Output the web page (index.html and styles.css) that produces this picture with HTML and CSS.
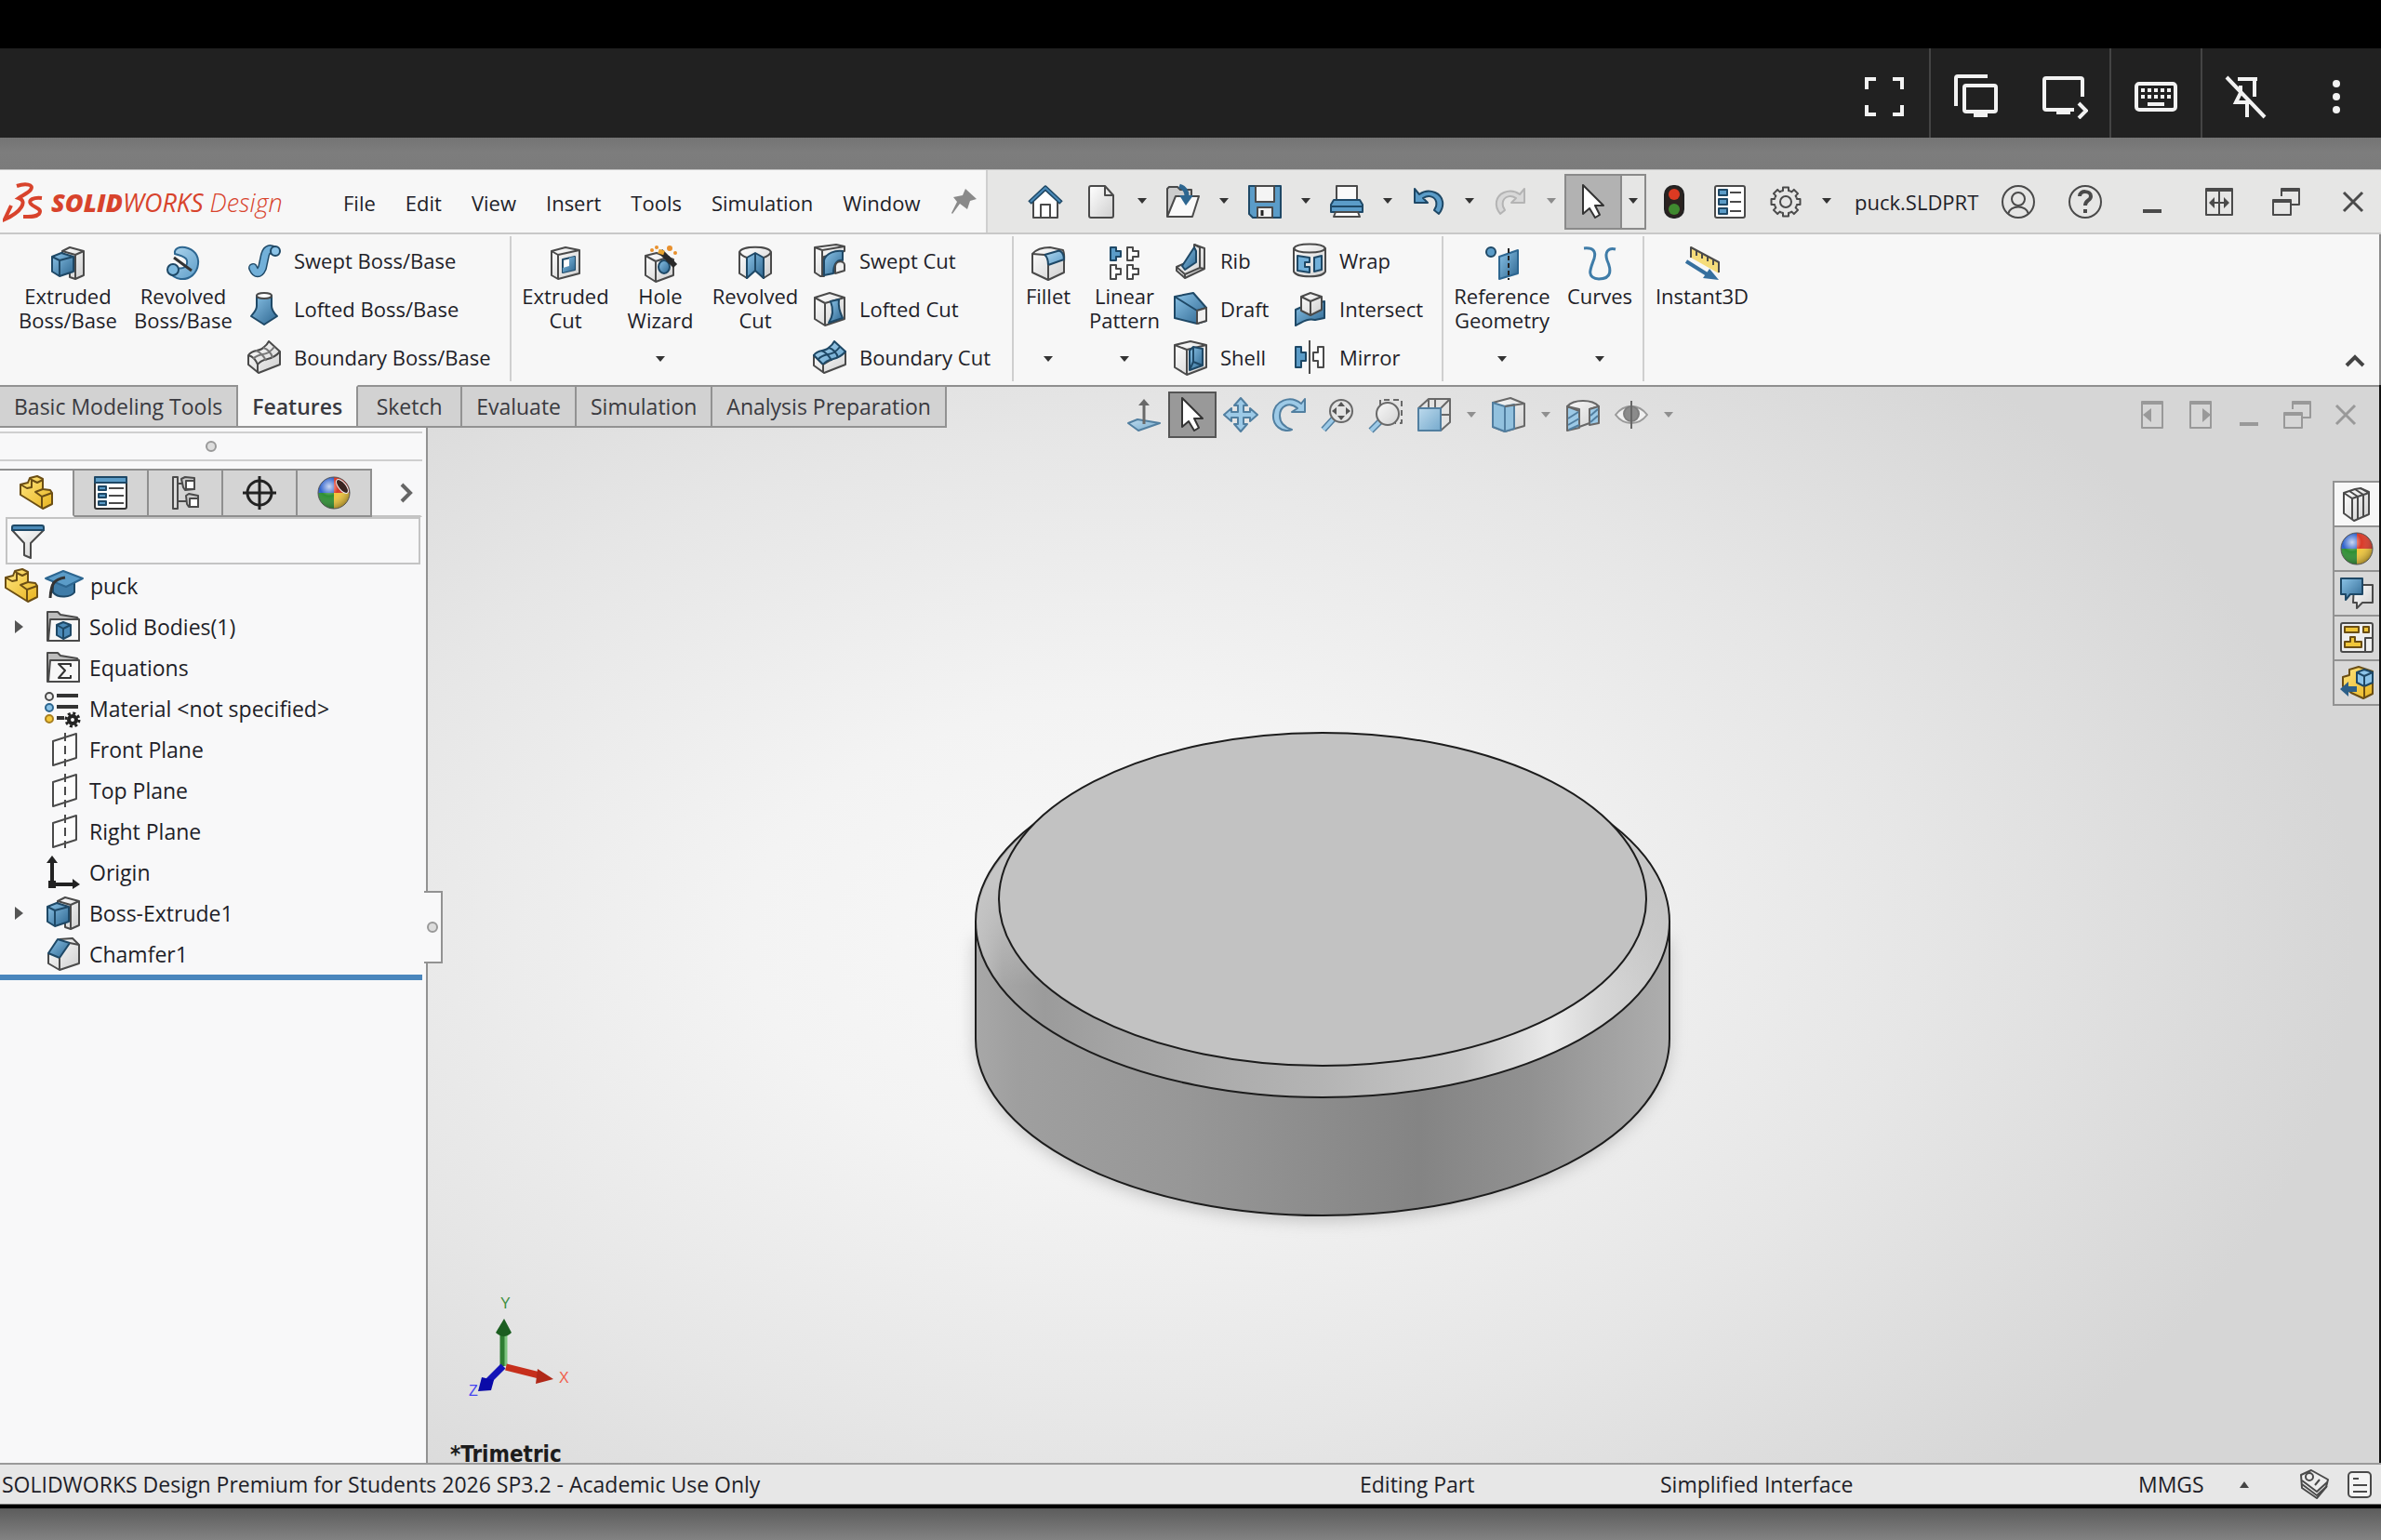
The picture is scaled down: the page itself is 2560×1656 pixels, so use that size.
FILE: index.html
```html
<!DOCTYPE html>
<html lang="en">
<head>
<meta charset="utf-8">
<title>SOLIDWORKS Design - puck.SLDPRT</title>
<link rel="stylesheet" href="styles.css">
</head>
<body>
<svg class="defs" aria-hidden="true">
  <defs>
    <linearGradient id="b" x1="0" y1="0" x2="1" y2="1"><stop offset="0" stop-color="#8cc4e8"/><stop offset="1" stop-color="#2d6690"/></linearGradient>
    <linearGradient id="lb" x1="0" y1="0" x2="1" y2="1"><stop offset="0" stop-color="#b4d9f0"/><stop offset="1" stop-color="#5b9cc8"/></linearGradient>
    <linearGradient id="w" x1="0" y1="0" x2="1" y2="1"><stop offset="0" stop-color="#ffffff"/><stop offset="1" stop-color="#cfcfcf"/></linearGradient>
    <linearGradient id="y" x1="0" y1="0" x2="1" y2="1"><stop offset="0" stop-color="#ffe680"/><stop offset="1" stop-color="#e8b420"/></linearGradient>
    <radialGradient id="shine" cx=".35" cy=".3" r=".75"><stop offset="0" stop-color="#fff" stop-opacity=".75"/><stop offset=".4" stop-color="#fff" stop-opacity="0"/><stop offset="1" stop-color="#000" stop-opacity=".35"/></radialGradient>
    <symbol id="i-down" viewBox="0 0 10 7"><path d="M0 0H10L5 6Z" fill="currentColor" stroke="none"/></symbol>
    <symbol id="i-boss" viewBox="0 0 36 36"><path d="M12 5 20 1 35 5V31L26 35 20 33V12L12 10Z" fill="url(#w)"/><path d="M12 5 26 9V35M26 9 35 5"/><path d="M1 11 11 7 24 11V27L9 32 1 27Z" fill="url(#b)" stroke="#1e4866"/><path d="M1 11 9 15 24 11M9 15V32" stroke="#1e4866"/></symbol>
    <symbol id="i-revolve" viewBox="0 0 36 36"><path d="M9 8C8 2 14 0 20 1 30 3 35 10 34 19 33 29 25 36 15 35 9 34 6 32 3 28L11 23C19 25 23 21 22 15 20 10 14 10 9 8Z" fill="url(#lb)" stroke="#2d6690"/><circle cx="7" cy="25" r="6" fill="#7fb9de" stroke="#1e4866"/><path d="M8 12 27 26" stroke="#333" stroke-width="3"/></symbol>
    <symbol id="i-sweep" viewBox="0 0 36 36"><path d="M6 26C9 33 13 33 16 26L19 12C21 5 25 5 29 8" stroke="#1e4866" stroke-width="10" stroke-linecap="round"/><path d="M6 26C9 33 13 33 16 26L19 12C21 5 25 5 29 8" stroke="#72b0d9" stroke-width="7" stroke-linecap="round"/><circle cx="30" cy="8" r="5" fill="#8cc4e8" stroke="#1e4866"/></symbol>
    <symbol id="i-loft" viewBox="0 0 36 36"><path d="M10 4V15C10 20 6 23 4 26L18 35 32 26C29 23 26 20 26 15V4Z" fill="url(#b)" stroke="#1e4866"/><ellipse cx="18" cy="4" rx="8" ry="3" fill="#fff"/></symbol>
    <symbol id="i-boundary" viewBox="0 0 36 36"><path d="M1 16C6 9 13 13 18 7 21 5 22 3 23 1L35 12V26L12 35 1 26Z" fill="url(#w)"/><path d="M1 16C5 17 9 21 11 26V35M11 26C18 17 25 24 35 12" /><path d="M6 20C13 12 20 19 29 7M9 11C13 12 18 17 20 22M17 8C22 9 26 14 27 19" stroke="#777"/></symbol>
    <symbol id="i-boundcut" viewBox="0 0 36 36"><path d="M1 16V27L12 35 35 26V12L11 26Z" fill="url(#w)"/><path d="M1 16C6 9 13 13 18 7 21 5 22 3 23 1L35 12C25 24 18 17 11 26Z" fill="url(#lb)" stroke="#1e4866"/><path d="M6 20C13 12 20 19 29 7M9 11C13 12 18 17 20 22M17 8C22 9 26 14 27 19" stroke="#1e4866"/><path d="M11 26V35"/></symbol>
    <symbol id="i-excut" viewBox="0 0 36 36"><path d="M3 5 18 1 33 4V29L10 35 3 31Z" fill="url(#w)"/><path d="M3 5 10 9 33 4M10 9V35"/><path d="M15 14 28 11V25L15 28Z" fill="#fff" stroke="#1e4866"/><path d="M22 12 28 11V25L15 28V23L22 21Z" fill="url(#b)" stroke="none"/></symbol>
    <symbol id="i-hole" viewBox="0 0 36 36"><path d="M2 10 14 7 32 14V31L13 38 2 31Z" fill="url(#w)"/><path d="M2 10 13 16V38M13 16 28 11"/><ellipse cx="22" cy="22" rx="6" ry="7" fill="url(#b)" stroke="#1e4866"/><path d="M18 5 34 21" stroke="#2a2a2a" stroke-width="6"/><path d="M16 5 22 7" stroke="#e8a32e" stroke-width="5"/><g fill="#e8902e" stroke="none"><circle cx="9" cy="4" r="2"/><circle cx="14" cy="1" r="2"/><circle cx="28" cy="2" r="3"/><circle cx="34" cy="7" r="2"/></g></symbol>
    <symbol id="i-revcut" viewBox="0 0 36 36"><path d="M1 6V29L9 34 18 25 27 34 35 29V6C32-1 4-1 1 6Z" fill="url(#w)"/><path d="M9 12 18 7 27 12V34L18 26 9 34Z" fill="url(#b)" stroke="#1e4866"/><path d="M18 7V26" stroke="#1e4866"/><path d="M1 6C3 10 6 11 9 12M27 12C30 11 33 10 35 6"/></symbol>
    <symbol id="i-sweepcut" viewBox="0 0 36 36"><path d="M2 4 25 1 34 3V8L12 14V35L8 35 2 31Z" fill="url(#w)"/><path d="M2 4 10 7 34 3M10 7V35"/><path d="M12 34V18C14 10 24 7 32 8V18C26 17 22 22 22 32Z" fill="url(#b)" stroke="#1e4866"/><path d="M24 32V24C25 18 34 18 34 23V29Z" fill="#eee"/></symbol>
    <symbol id="i-loftcut" viewBox="0 0 36 36"><path d="M2 6 18 1 34 6V29L13 36 2 29Z" fill="url(#w)"/><path d="M2 6 13 12 34 6M13 12V36"/><path d="M19 10 28 8C27 16 29 22 32 28L17 33C22 26 22 18 19 10Z" fill="url(#b)" stroke="#1e4866"/></symbol>
    <symbol id="i-fillet" viewBox="0 0 36 36"><path d="M1 8C6 2 14 1 20 1L34 4C36 9 35 13 35 18V28L18 36 1 28Z" fill="url(#w)"/><path d="M14 9 28 5C32 4 35 8 35 14L18 20C18 14 17 11 14 9Z" fill="url(#lb)" stroke="#1e4866"/><path d="M1 8 14 9M18 20V36"/></symbol>
    <symbol id="i-pattern" viewBox="0 0 36 36"><path d="M3 1H9V5H14V11H9V15H3Z" fill="#5b9cc8" stroke="#1e4866"/><path d="M21 1H27V5H33V11H27V15H21ZM3 20H9V24H14V30H9V35H3ZM21 20H27V24H33V30H27V35H21Z" fill="#fff"/></symbol>
    <symbol id="i-rib" viewBox="0 0 36 36"><path d="M3 25 12 21 22 18V1L33 5V27L12 37 3 29Z" fill="url(#w)"/><path d="M22 1 28 4V26L12 33M3 25 12 33V37M28 26 33 27"/><path d="M9 24 22 4 24 8V20L12 28Z" fill="url(#b)" stroke="#1e4866"/></symbol>
    <symbol id="i-draft" viewBox="0 0 36 36"><path d="M1 5 21 1 35 17V31L25 34 1 28Z" fill="url(#b)" stroke="#1e4866"/><path d="M1 5 25 20 35 17M25 20V34" stroke="#1e4866"/><path d="M25 20 35 17V31L25 34Z" fill="#f0f0f0"/></symbol>
    <symbol id="i-shell" viewBox="0 0 36 36"><path d="M1 5 18 1 35 5V29L14 37 1 29Z" fill="url(#w)"/><path d="M1 5 14 10V37M14 10 35 5"/><path d="M17 11 21 7 31 9V27L17 32Z" fill="url(#b)" stroke="#1e4866"/><path d="M21 7V23L31 27M21 23 17 32" stroke="#1e4866"/></symbol>
    <symbol id="i-wrap" viewBox="0 0 36 36"><path d="M1 5V30C4 37 32 37 35 30V5C32-1 4-1 1 5Z" fill="url(#w)"/><path d="M1 5C4 11 32 11 35 5"/><path d="M5 13 18 15V20H13V25H18V31L5 29ZM23 15 31 13V28L23 30Z" fill="#72b0d9" stroke="#1e4866"/></symbol>
    <symbol id="i-intersect" viewBox="0 0 36 36"><path d="M3 19 12 15 34 10V28L24 30C14 28 10 33 3 36Z" fill="url(#b)" stroke="#1e4866"/><path d="M9 5 19 1 31 5V19L19 25 9 20Z" fill="url(#w)"/><path d="M9 5 19 10 31 5M19 10V25"/></symbol>
    <symbol id="i-mirror" viewBox="0 0 36 36"><path d="M3 7H9V13H14V22H9V29H3Z" fill="#5b9cc8" stroke="#1e4866"/><path d="M18 0V36"/><path d="M33 7H27V13H22V22H27V29H33Z" fill="#fff"/></symbol>
    <symbol id="i-refgeo" viewBox="0 0 36 36"><circle cx="6" cy="6" r="5" fill="#5b9cc8" stroke="#1e4866"/><path d="M15 11 35 4V29L15 35Z" fill="url(#b)" stroke="#2d6690"/><path d="M25 2V36" stroke="#222" stroke-dasharray="5 3"/></symbol>
    <symbol id="i-curves" viewBox="0 0 36 36"><path d="M1 2C12 1 14 6 12 13 9 22 2 34 17 35 32 35 30 24 26 15 23 6 27 1 35 3" stroke="#3f7ca8" stroke-width="3"/></symbol>
    <symbol id="i-instant" viewBox="0 0 36 36"><path d="M6 0 36 17V29L6 12Z" fill="#f5dc7a" stroke="none"/><path d="M36 28V17L6 1V12M12 4V10M18 8V13M24 11V16M30 14V20"/><path d="M1 16 25 31" stroke="#356f9e" stroke-width="4"/><path d="M19 34 26 24 36 36Z" fill="#356f9e" stroke="none"/></symbol>
    <symbol id="i-arrow" viewBox="0 0 36 36"><path d="M7 0V31L14 25 20 35 25 32 20 22 29 22Z" fill="#fff" stroke="#333"/></symbol>
    <symbol id="i-restore" viewBox="0 0 36 36"><path d="M13 12V4H32V21H23" /><path d="M13 5H32M4 17H23" stroke-width="4"/><path d="M4 16H23V32H4Z"/></symbol>
    <symbol id="i-min" viewBox="0 0 36 36"><path d="M8 28H28" stroke-width="4"/></symbol>
    <symbol id="i-close" viewBox="0 0 36 36"><path d="M8 8 28 28M28 8 8 28" stroke-width="3"/></symbol>
    <symbol id="i-part" viewBox="0 0 36 36"><path d="M1 9 9 7 11 2 19 0 25 3V14L33 15 35 18V30L25 35 1 20Z" fill="url(#y)" stroke="#6b4e14"/><path d="M1 9 8 13 13 12V4L19 7 25 4M11 2 13 4M24 22 35 18M24 22V35M24 22 17 17 25 14" stroke="#6b4e14"/></symbol>
    <symbol id="i-plane" viewBox="0 0 36 36"><path d="M7 9 32 1V27L7 35Z" fill="#fcfcfc"/><path d="M20 0V36" stroke-dasharray="9 5"/></symbol>
    <symbol id="i-folder" viewBox="0 0 36 36"><path d="M1 33V2H12L15 5 33 8 35 11V33Z" fill="#bdbdbd"/><path d="M4 10H35V33H2Z" fill="#f7f7f7"/></symbol>
    <symbol id="i-ball" viewBox="0 0 36 36"><g stroke="none"><path d="M18 18V1A17 17 0 0 0 1 18Z" fill="#2f62cc"/><path d="M18 18V1A17 17 0 0 1 35 18Z" fill="#d93a28"/><path d="M18 18H1A17 17 0 0 0 18 35Z" fill="#2e8f33"/><path d="M18 18H35A17 17 0 0 1 18 35Z" fill="#f0c63a"/></g><circle cx="18" cy="18" r="17" fill="url(#shine)" stroke="#555" stroke-width="1"/></symbol>
    <symbol id="i-list" viewBox="0 0 36 36"><rect x="2" y="1" width="32" height="34" rx="2" fill="#fff"/><path d="M6 5H15V11H6ZM6 15H15V21H6ZM6 25H15V31H6Z" fill="#5b9cc8" stroke="#1e4866"/><path d="M18 8H30M18 18H30M18 28H30"/></symbol>
  </defs>
</svg>

<div class="letterbox"></div>
<header class="remote">
  <button aria-label="Full screen"><svg width="48" height="48" viewBox="0 0 48 48"><path d="M5 16V5H15M33 5H43V16M43 33V43H33M15 43H5V33"/></svg></button>
  <button class="divided" aria-label="Displays"><svg width="48" height="48" viewBox="0 0 48 48"><path d="M3 34V4Q3 2 5 2H37"/><rect x="12" y="12" width="34" height="28" rx="2"/><path d="M22 43H37" stroke-width="6"/></svg></button>
  <button aria-label="Send to display"><svg width="50" height="48" viewBox="0 0 50 48"><path d="M44 24V6Q44 4 42 4H5Q3 4 3 6V36Q3 38 5 38H35M40 31 48 39 40 47"/><path d="M16 40H31" stroke-width="6"/></svg></button>
  <button class="divided" aria-label="Keyboard"><svg width="48" height="48" viewBox="0 0 48 48"><rect x="3" y="10" width="42" height="28" rx="3"/><path d="M8 17H42M8 24H42" stroke-width="4" stroke-dasharray="4 3"/><path d="M15 32H33" stroke-width="4"/></svg></button>
  <button class="divided" aria-label="Unpin toolbar"><svg width="48" height="48" viewBox="0 0 48 48"><path d="M2 3 43 46M14 5H35M32 5V24M17 12V20L12 30H27M24 30V46"/></svg></button>
  <button aria-label="More"><svg width="48" height="48" viewBox="0 0 48 48"><g class="dots"><circle cx="24" cy="10" r="4"/><circle cx="24" cy="24" r="4"/><circle cx="24" cy="38" r="4"/></g></svg></button>
</header>

<div class="desktop">
<main class="app">
  <div class="titlebar">
    <div class="menu-side">
      <div class="logo"><svg class="mark" width="46" height="44" viewBox="0 0 46 44"><path d="M15 4C24 1 34 2 30 8 27 12 21 14 17 17 27 20 20 32 2 40L9 25"/><path d="M42 17C33 16 27 19 30 23 34 28 43 28 39 34 35 38 29 37 22 37"/></svg><span class="brand"><b>SOLID</b>WORKS <span class="thin">Design</span></span></div>
      <nav class="menus">
        <button>File</button><button>Edit</button><button>View</button><button>Insert</button><button>Tools</button><button>Simulation</button><button>Window</button>
      </nav>
      <button class="pin" aria-label="Pin menu"><svg width="30" height="32" viewBox="0 0 30 32"><path d="M16 1 28 12 21 14 18 23 10 17 2 28 1 27 7 15 3 10 13 8Z"/></svg></button>
    </div>
    <div class="quick">
      <button class="home" aria-label="Home"><svg class="ic"><path d="M5 17V35H31V17L18 5Z" fill="#fff"/><path d="M13 35V21H23V35"/><path d="M1 19 18 3 35 19" stroke="#1e4866" stroke-width="5"/><path d="M2 18 18 3 34 18" stroke="#4b8ab8" stroke-width="2"/></svg></button>
      <div class="split"><button aria-label="New"><svg class="ic"><path d="M5 3Q5 1 7 1H22L31 11V33Q31 35 29 35H7Q5 35 5 33Z" fill="url(#w)"/><path d="M22 1V11H31"/></svg></button><button class="drop" aria-label="New options"><svg><use href="#i-down"/></svg></button></div>
      <div class="split"><button aria-label="Open"><svg class="ic"><path d="M1 34V4L3 2H12L15 5H27V12" fill="#ccc"/><path d="M1 34 10 12H35L28 34Z" fill="#fafafa"/><path d="M14 1C20 3 22 7 22 12" stroke="#2d6690" stroke-width="5"/><path d="M14 11H29L21 22Z" fill="#2d6690" stroke="none"/></svg></button><button class="drop" aria-label="Open options"><svg><use href="#i-down"/></svg></button></div>
      <div class="split"><button aria-label="Save"><svg class="ic"><path d="M1 1H35V35H5L1 31Z" fill="#5b9cc8" stroke="#1e4866"/><path d="M8 1H28V18H8ZM10 24H26V35H10Z" fill="#f4f4f4"/><path d="M15 27V33" stroke="#222" stroke-width="3"/></svg></button><button class="drop" aria-label="Save options"><svg><use href="#i-down"/></svg></button></div>
      <div class="split"><button aria-label="Print"><svg class="ic"><path d="M7 1H29V18H7Z" fill="#fafafa"/><path d="M4 16H32L35 21V29H1V21Z" fill="#5b9cc8" stroke="#1e4866"/><path d="M1 23H35" stroke="#1e4866"/><path d="M6 29H30L32 34H4Z" fill="#fff"/></svg></button><button class="drop" aria-label="Print options"><svg><use href="#i-down"/></svg></button></div>
      <div class="split"><button aria-label="Undo"><svg class="ic"><path d="M3 4V19H17L12 14C20 9 28 14 26 23L24 27 29 31C36 22 34 12 25 8 18 5 12 7 8 10Z" fill="#5b9cc8" stroke="#1e4866"/></svg></button><button class="drop" aria-label="Undo options"><svg><use href="#i-down"/></svg></button></div>
      <div class="split off"><button aria-label="Redo" disabled><svg class="ic"><path d="M33 4V19H19L24 14C16 9 8 14 10 23L12 27 7 31C0 22 2 12 11 8 18 5 24 7 28 10Z" fill="#d8d8d8" stroke="#b4b4b4"/></svg></button><button class="drop" aria-label="Redo options" disabled><svg><use href="#i-down"/></svg></button></div>
      <div class="select"><button class="on" aria-label="Select"><svg class="ic"><use href="#i-arrow"/></svg></button><button class="more" aria-label="Select options"><svg><use href="#i-down"/></svg></button></div>
      <button aria-label="Rebuild"><svg class="ic"><rect x="8" y="1" width="20" height="34" rx="9" fill="#2b2320" stroke="#222"/><circle cx="18" cy="10" r="6" fill="#dd3a22" stroke="none"/><circle cx="18" cy="26" r="6" fill="#3f8a2f" stroke="none"/></svg></button>
      <button class="spaced" aria-label="File properties"><svg class="ic"><use href="#i-list"/></svg></button>
      <div class="split spaced"><button aria-label="Options"><svg class="ic"><g transform="translate(18 18)"><path id="tooth" d="M11.550 -4.780 12 -3 15.500 -3V3H12L11.550 4.780"/><use href="#tooth" transform="rotate(45)"/><use href="#tooth" transform="rotate(90)"/><use href="#tooth" transform="rotate(135)"/><use href="#tooth" transform="rotate(180)"/><use href="#tooth" transform="rotate(225)"/><use href="#tooth" transform="rotate(270)"/><use href="#tooth" transform="rotate(315)"/><circle r="6"/></g></svg></button><button class="drop" aria-label="Options menu"><svg><use href="#i-down"/></svg></button></div>
      <span class="doc-name">puck.SLDPRT</span>
      <div class="window-buttons">
        <button aria-label="Account"><svg class="ic"><circle cx="18" cy="18" r="17"/><circle cx="18" cy="15" r="7"/><path d="M7 31C9 21 27 21 29 31"/></svg></button>
        <button aria-label="Help"><svg class="ic"><circle cx="18" cy="18" r="17"/><path d="M12 12C12 5 24 6 24 12 24 17 18 16 18 22" stroke-width="4"/><path d="M18 26V30" stroke-width="4"/></svg></button>
        <button aria-label="Minimize"><svg class="ic"><use href="#i-min"/></svg></button>
        <button aria-label="Span displays"><svg class="ic"><path d="M4 4H32V32H4ZM18 4V32M9 19H27"/><path d="M4 5H32" stroke-width="4"/><path d="M13 13V25L7 19ZM23 13V25L29 19Z" fill="#4a4a4a" stroke="none"/></svg></button>
        <button aria-label="Restore"><svg class="ic"><use href="#i-restore"/></svg></button>
        <button aria-label="Close"><svg class="ic"><use href="#i-close"/></svg></button>
      </div>
    </div>
  </div>

  <div class="ribbon">
    <section class="group boss">
      <button class="big"><svg class="ic"><use href="#i-boss"/></svg>Extruded<br>Boss/Base</button>
      <button class="big"><svg class="ic"><use href="#i-revolve"/></svg>Revolved<br>Boss/Base</button>
      <div class="stack">
        <button><svg class="ic"><use href="#i-sweep"/></svg>Swept Boss/Base</button>
        <button><svg class="ic"><use href="#i-loft"/></svg>Lofted Boss/Base</button>
        <button><svg class="ic"><use href="#i-boundary"/></svg>Boundary Boss/Base</button>
      </div>
    </section>
    <section class="group cut">
      <button class="big"><svg class="ic"><use href="#i-excut"/></svg>Extruded<br>Cut</button>
      <button class="big"><svg class="ic"><use href="#i-hole"/></svg>Hole<br>Wizard<svg class="caret"><use href="#i-down"/></svg></button>
      <button class="big"><svg class="ic"><use href="#i-revcut"/></svg>Revolved<br>Cut</button>
      <div class="stack">
        <button><svg class="ic"><use href="#i-sweepcut"/></svg>Swept Cut</button>
        <button><svg class="ic"><use href="#i-loftcut"/></svg>Lofted Cut</button>
        <button><svg class="ic"><use href="#i-boundcut"/></svg>Boundary Cut</button>
      </div>
    </section>
    <section class="group edit">
      <button class="big"><svg class="ic"><use href="#i-fillet"/></svg>Fillet<svg class="caret"><use href="#i-down"/></svg></button>
      <button class="big wide"><svg class="ic"><use href="#i-pattern"/></svg>Linear<br>Pattern<svg class="caret"><use href="#i-down"/></svg></button>
      <div class="stack">
        <button><svg class="ic"><use href="#i-rib"/></svg>Rib</button>
        <button><svg class="ic"><use href="#i-draft"/></svg>Draft</button>
        <button><svg class="ic"><use href="#i-shell"/></svg>Shell</button>
      </div>
      <div class="stack second">
        <button><svg class="ic"><use href="#i-wrap"/></svg>Wrap</button>
        <button><svg class="ic"><use href="#i-intersect"/></svg>Intersect</button>
        <button><svg class="ic"><use href="#i-mirror"/></svg>Mirror</button>
      </div>
    </section>
    <section class="group ref">
      <button class="big wide"><svg class="ic"><use href="#i-refgeo"/></svg>Reference<br>Geometry<svg class="caret"><use href="#i-down"/></svg></button>
      <button class="big"><svg class="ic"><use href="#i-curves"/></svg>Curves<svg class="caret"><use href="#i-down"/></svg></button>
    </section>
    <section class="group last">
      <button class="big"><svg class="ic"><use href="#i-instant"/></svg>Instant3D</button>
    </section>
    <button class="collapse" aria-label="Collapse ribbon"><svg width="22" height="14" viewBox="0 0 22 14"><path d="M2 12 11 3 20 12"/></svg></button>
  </div>

  <div class="work">
    <div class="strip">
      <nav class="tabs">
        <button>Basic Modeling Tools</button><button class="current">Features</button><button>Sketch</button><button>Evaluate</button><button>Simulation</button><button>Analysis Preparation</button>
      </nav>
      <div class="hud">
        <button aria-label="Normal to"><svg class="ic"><path d="M1 27 11 23 35 27 12 35Z" fill="url(#lb)" stroke="#2d6690"/><path d="M18 28V5" stroke-width="3"/><path d="M12 8 18 1 24 8Z" fill="#4a4a4a" stroke="none"/></svg></button>
        <button class="on" aria-label="Select"><svg class="ic"><use href="#i-arrow"/></svg></button>
        <button aria-label="Pan"><svg class="ic"><path d="M18 0 25 8H21V15H28V11L36 18 28 25V21H21V28H25L18 36 11 28H15V21H8V25L0 18 8 11V15H15V8H11Z" fill="#8cc4e8" stroke="#2d6690"/></svg></button>
        <button aria-label="Rotate"><svg class="ic"><path d="M35 1V15H21L27 11C18 3 8 9 8 19 8 26 12 31 21 34 10 38 0 29 1 18 2 3 19-4 31 6Z" fill="#8cc4e8" stroke="#2d6690"/></svg></button>
        <button aria-label="Zoom to fit"><svg class="ic"><path d="M3 34 14 22" stroke="#2d6690" stroke-width="7"/><path d="M3 34 14 22" stroke="#8cc4e8" stroke-width="4"/><circle cx="22" cy="14" r="12" fill="#e4e4e4"/><path d="M22 4 26 9H18ZM22 24 18 19H26ZM12 14 17 10V18ZM32 14 27 18V10Z" fill="#333" stroke="none"/></svg></button>
        <button aria-label="Zoom to area"><svg class="ic"><path d="M12 8V2H35V27H28" stroke-dasharray="6 4"/><path d="M2 35 12 25" stroke="#2d6690" stroke-width="7"/><path d="M2 35 12 25" stroke="#8cc4e8" stroke-width="4"/><circle cx="20" cy="17" r="12" fill="url(#w)"/></svg></button>
        <button aria-label="View orientation"><svg class="ic"><path d="M1 11 12 1H35V26L25 35M1 11 12 1M25 11 35 1M19 1V10M26 18H35M12 1V10"/><path d="M1 11H25V35H1Z" fill="url(#lb)" stroke="#2d6690"/></svg></button>
        <button class="thin-drop" aria-label="View orientation options"><svg><use href="#i-down"/></svg></button>
        <button aria-label="Display style"><svg class="ic"><path d="M1 5 20 0 35 6V30L14 36 1 31Z" fill="url(#w)"/><path d="M1 5 14 9V36L1 31ZM14 9 24 7V33L14 36Z" fill="#7fb9de" stroke="#2d6690"/><path d="M14 9 35 6"/></svg></button>
        <button class="thin-drop" aria-label="Display style options"><svg><use href="#i-down"/></svg></button>
        <button aria-label="Section view"><svg class="ic"><path d="M1 9C8 1 28 1 35 9L25 12V27L14 31V12Z" fill="url(#w)"/><path d="M1 9 14 14V32L1 35ZM25 12 35 9V27L25 29Z" fill="#8cc4e8"/><path d="M2 22 13 15M2 29 14 22M3 34 14 29M26 19 34 12M26 26 34 19" stroke="#2d6690"/></svg></button>
        <button class="eye" aria-label="Hide or show items"><svg class="ic"><path d="M1 18C10 6 26 6 35 18 26 30 10 30 1 18Z" fill="#f4f4f4" stroke="#888"/><circle cx="18" cy="17" r="8" fill="#777" stroke="#666"/><path d="M18 3V33"/></svg></button>
        <button class="thin-drop" aria-label="Hide or show options"><svg><use href="#i-down"/></svg></button>
      </div>
      <div class="doc-buttons">
        <button aria-label="Previous pane"><svg class="ic"><path d="M7 4H29V32H7Z"/><path d="M7 5H29" stroke-width="4"/><path d="M17 11V26L8 18Z" fill="currentColor" stroke="none"/></svg></button>
        <button aria-label="Next pane"><svg class="ic"><path d="M7 4H29V32H7Z"/><path d="M7 5H29" stroke-width="4"/><path d="M20 11V26L29 18Z" fill="currentColor" stroke="none"/></svg></button>
        <button aria-label="Minimize document"><svg class="ic"><use href="#i-min"/></svg></button>
        <button aria-label="Restore document"><svg class="ic"><use href="#i-restore"/></svg></button>
        <button aria-label="Close document"><svg class="ic"><use href="#i-close"/></svg></button>
      </div>
    </div>

    <div class="body">
      <aside class="panel">
        <div class="grip"><i class="knob"></i></div>
        <div class="panel-tabs">
          <button class="current" aria-label="Feature tree"><svg class="ic"><use href="#i-part"/></svg></button>
          <button aria-label="Properties"><svg class="ic"><rect x="1" y="1" width="34" height="34" rx="2" fill="#fff" stroke="#333"/><path d="M1 1H35V7H1Z" fill="#5b9cc8" stroke="#1e4866"/><path d="M5 11H13V15H5ZM5 19H13V23H5ZM5 27H13V31H5Z" fill="#5b9cc8" stroke="#1e4866"/><path d="M16 13H32M16 21H32M16 29H32"/></svg></button>
          <button aria-label="Configurations"><svg class="ic"><path d="M5 1H10V35H5ZM10 8H18M10 27H20" fill="#ddd"/><path d="M14 3 18 1 28 2V14L18 15 16 12ZM19 21 22 19 32 21V33L22 33 20 30Z" fill="#ccc"/><path d="M19 5H28V14H19ZM23 24H32V33H23Z" fill="#fff"/></svg></button>
          <button aria-label="Dimensions"><svg class="ic"><g stroke="#222" stroke-width="3"><circle cx="18" cy="18" r="13"/><path d="M18 0V36M0 18H36"/></g></svg></button>
          <button aria-label="Appearances"><svg class="ic"><use href="#i-ball"/><ellipse cx="27" cy="11" rx="4" ry="9" transform="rotate(-40 27 11)" fill="#3a2420" stroke="#eee" stroke-width="1"/></svg></button>
          <button class="next" aria-label="More tabs"><svg width="14" height="22" viewBox="0 0 14 22"><path d="M2 2 11 11 2 20"/></svg></button>
        </div>
        <label class="filter"><svg class="ic"><path d="M1 6 14 20V33L21 36V20L35 6Z" fill="url(#w)"/><path d="M1 3Q1 1 3 1H33Q35 1 35 3V6H1Z" fill="#4b8ab8" stroke="#1e4866"/></svg><input type="text" aria-label="Filter tree"></label>
        <ul class="tree">
          <li class="root"><svg class="ic"><use href="#i-part"/></svg><svg class="cap ic" viewBox="0 0 42 36"><path d="M9 14V25C15 32 28 30 32 25V13Z" fill="#3f7ca8" stroke="#1e4866"/><path d="M1 10 20 2 41 10 23 19Z" fill="#5b9cc8" stroke="#2d6690"/><path d="M22 9C10 11 7 15 6 31" stroke="#333" stroke-width="3"/></svg>puck</li>
          <li class="parent"><svg class="ic"><use href="#i-folder"/><path d="M11 16 18 13 26 16V27L18 31 11 27Z" fill="#4b8ab8" stroke="#1e4866"/><path d="M11 16 18 20 26 16M18 20V31" stroke="#1e4866"/></svg>Solid Bodies(1)</li>
          <li><svg class="ic"><use href="#i-folder"/><path d="M26 17V14H13L20 21 13 29H26V26" stroke="#333"/></svg>Equations</li>
          <li><svg class="ic"><circle cx="3" cy="5" r="4" fill="#eee"/><circle cx="3" cy="17" r="4" fill="#8cc4e8" stroke="#2d6690"/><circle cx="3" cy="29" r="4" fill="#f5c93c" stroke="#a87f20"/><path d="M11 4H34M11 16H34M11 28H19" stroke="#333" stroke-width="4"/><circle cx="28" cy="30" r="7" stroke="#222" stroke-width="3" stroke-dasharray="3 2.500"/><circle cx="28" cy="30" r="4" stroke="#222" stroke-width="4"/></svg>Material &lt;not specified&gt;</li>
          <li><svg class="ic"><use href="#i-plane"/></svg>Front Plane</li>
          <li><svg class="ic"><use href="#i-plane"/></svg>Top Plane</li>
          <li><svg class="ic"><use href="#i-plane"/></svg>Right Plane</li>
          <li><svg class="ic"><path d="M6 4V31H30" stroke="#222" stroke-width="4"/><path d="M0 8 6 0 12 8ZM28 25 36 31 28 36ZM2 27H10V35H2Z" fill="#222" stroke="none"/></svg>Origin</li>
          <li class="parent"><svg class="ic"><use href="#i-boss"/></svg>Boss-Extrude1</li>
          <li><svg class="ic"><path d="M2 18 14 2 28 1 35 8V28L14 35 2 28Z" fill="url(#w)"/><path d="M2 17 12 2 25 6 14 22Z" fill="url(#b)" stroke="#1e4866"/><path d="M14 22V35M25 6 35 8"/></svg>Chamfer1</li>
        </ul>
        <div class="rollback"></div>
        <button class="splitter" aria-label="Collapse panel"><i class="knob"></i></button>
      </aside>

      <section class="viewport">
        <svg class="puck" width="820" height="600" viewBox="1010 750 820 600">
          <defs>
            <linearGradient id="side" gradientUnits="userSpaceOnUse" x1="1048" x2="1795" y1="0" y2="0"><stop offset="0" stop-color="#a8a8a8"/><stop offset=".06" stop-color="#9f9f9f"/><stop offset=".3" stop-color="#979797"/><stop offset=".5" stop-color="#8c8c8c"/><stop offset=".64" stop-color="#848484"/><stop offset=".8" stop-color="#919191"/><stop offset=".93" stop-color="#a4a4a4"/><stop offset="1" stop-color="#aeaeae"/></linearGradient>
            <linearGradient id="chamfer" gradientUnits="userSpaceOnUse" x1="1048" x2="1795" y1="0" y2="0"><stop offset="0" stop-color="#c2c2c2"/><stop offset=".04" stop-color="#a6a6a6"/><stop offset=".1" stop-color="#9b9b9b"/><stop offset=".2" stop-color="#a4a4a4"/><stop offset=".5" stop-color="#b4b4b4"/><stop offset=".7" stop-color="#c6c6c6"/><stop offset=".83" stop-color="#eaeaea"/><stop offset=".9" stop-color="#d6d6d6"/><stop offset="1" stop-color="#c8c8c8"/></linearGradient>
            <linearGradient id="rim" gradientUnits="userSpaceOnUse" x1="0" x2="0" y1="840" y2="1060"><stop offset="0" stop-color="#c6c6c6"/><stop offset=".5" stop-color="#c6c6c6"/><stop offset="1" stop-color="#c6c6c6" stop-opacity="0"/></linearGradient>
            <filter id="soft" x="-10%" y="-10%" width="120%" height="120%"><feGaussianBlur stdDeviation="9"/></filter>
          </defs>
          <path d="M1048 1010V1120A373 192 0 0 0 1795 1120V1010Z" fill="#999" opacity=".55" filter="url(#soft)"/>
          <g stroke="#1c1c1c" stroke-width="2">
            <path d="M1049 991V1117A373 190 0 0 0 1795 1117V991Z" fill="url(#side)"/>
            <ellipse cx="1422" cy="991" rx="373" ry="189" fill="url(#chamfer)"/>
            <ellipse cx="1422" cy="991" rx="371" ry="187" fill="url(#rim)" stroke="none"/>
            <ellipse cx="1422" cy="967" rx="348" ry="179" fill="#c2c2c2"/>
          </g>
        </svg>
        <svg class="triad" width="130" height="120" viewBox="490 1385 130 120">
          <path d="M541 1470V1436" stroke="#2e7d32" stroke-width="7"/><path d="M544 1470V1436" stroke="#7cc47e" stroke-width="3"/><path d="M542 1419 550 1434Q542 1442 533 1434Z" fill="#1b5e20"/>
          <path d="M544 1471 580 1480" stroke="#c62f1c" stroke-width="7"/><path d="M578 1473 595 1484 576 1489Z" fill="#b02818"/>
          <path d="M541 1470 525 1486" stroke="#1414b8" stroke-width="7"/><path d="M518 1482 531 1485 528 1496 514 1497Z" fill="#0a0aa8"/>
          <g class="axis"><text x="538" y="1408" fill="#3e8e41">Y</text><text x="601" y="1488" fill="#f0604c">X</text><text x="504" y="1502" fill="#4646f0">Z</text></g>
        </svg>
        <div class="view-name">*Trimetric</div>
        <nav class="task-pane">
          <button class="current" aria-label="Design library"><svg class="ic"><path d="M4 6 10 4 16 2 22 1 31 5V29L15 36 4 28Z" fill="url(#w)"/><path d="M4 6 13 12V35M10 4 19 10V34M16 2 25 8V32M22 1 31 6M13 12 31 6"/></svg></button>
          <button aria-label="Appearances"><svg class="ic"><use href="#i-ball"/></svg></button>
          <button aria-label="Forum"><svg class="ic"><path d="M15 9H35V28H24L18 34V28H14Z" fill="url(#w)"/><path d="M1 2H24V19H11L6 25V19H1Z" fill="url(#b)" stroke="#1e4866"/></svg></button>
          <button aria-label="View palette"><svg class="ic"><rect x="1" y="2" width="34" height="31" rx="2" fill="#eee"/><path d="M5 6H20V12H5ZM25 6H31V12H25ZM5 28V22H11V17H16V22H23V28Z" fill="#f0c63a" stroke="#6b4e14"/><path d="M27 33V18H35"/></svg></button>
          <button aria-label="Import"><svg class="ic"><path d="M3 12 10 10V4L20 1 35 6V30L25 35 12 29 3 22Z" fill="url(#y)" stroke="#6b4e14"/><path d="M18 7 26 4 35 7V18L26 22 18 18Z" fill="#8cc4e8" stroke="#1e4866"/><path d="M18 7 26 11 35 7M26 11V22" stroke="#1e4866"/><path d="M26 22V35" stroke="#6b4e14"/><path d="M0 25 9 17V22H18V28H9V33Z" fill="#2d5f88" stroke="none"/></svg></button>
        </nav>
      </section>
    </div>
  </div>

  <footer class="status">
    <span class="edition">SOLIDWORKS Design Premium for Students 2026 SP3.2 - Academic Use Only</span>
    <span class="mode">Editing Part</span>
    <span class="interface">Simplified Interface</span>
    <button class="units">MMGS<svg width="10" height="7" viewBox="0 0 10 7"><path d="M0 7H10L5 0Z"/></svg></button>
    <button aria-label="Tags"><svg class="ic"><path d="M3 8 14 3 32 13 30 21 20 33 4 22Z" fill="#eee"/><path d="M4 14 20 26 31 16M4 18 20 30 31 20"/><circle cx="12" cy="10" r="4"/><path d="M18 19 23 13"/></svg></button>
    <button aria-label="Notes"><svg class="ic"><rect x="6" y="5" width="24" height="27" rx="4" fill="#f4f4f4"/><path d="M11 12H17M11 19H26M11 26H26"/></svg></button>
  </footer>
</main>
</div>
</body>
</html>
```

FILE: styles.css
```css
* { box-sizing: border-box; }

body {
  margin: 0;
  min-height: 100vh;
  display: flex;
  flex-direction: column;
  background: #000;
  color: #1e1e28;
  font: 22px/26px "Open Sans", "Noto Sans", sans-serif;
}

button {
  margin: 0;
  padding: 0;
  border: 0;
  background: none;
  color: inherit;
  font: inherit;
  display: flex;
  align-items: center;
  justify-content: center;
}

.defs { position: absolute; width: 0; height: 0; }

.ic {
  width: 36px;
  height: 36px;
  flex: none;
  overflow: visible;
  fill: none;
  stroke: #4a4a4a;
  stroke-width: 2px;
  stroke-linejoin: round;
}

symbol { overflow: visible; }

/* Remote session bar */
.letterbox { height: 52px; flex: none; }

.remote {
  height: 96px;
  flex: none;
  display: flex;
  justify-content: flex-end;
  background: #212121;
}

.remote button { width: 96px; padding-top: 8px; }
.remote .divided { width: 98px; border-left: 2px solid #444; }
.remote svg { fill: none; stroke: #f2f2f2; stroke-width: 4px; }
.remote .dots { fill: #f2f2f2; stroke: none; }

/* Desktop behind the window */
.desktop {
  flex: 1;
  display: flex;
  padding: 34px 0;
  background: linear-gradient(#747474, #7d7d7d 16px, #7b7b7b 34px, #7b7b7b calc(100% - 34px), #5c5c5c calc(100% - 34px), #828282);
}

.app {
  flex: 1;
  min-width: 0;
  display: flex;
  flex-direction: column;
  background: #f7f7f7;
  border-bottom: 4px solid #000;
}

/* Title bar */
.titlebar {
  height: 70px;
  display: flex;
  border-top: 1px solid #c4c4c4;
  border-bottom: 2px solid #c8c8c8;
}

.menu-side {
  width: 1062px;
  display: flex;
  align-items: center;
  padding-top: 3px;
  border-right: 2px solid #cfcfcf;
}

.logo {
  width: 369px;
  display: flex;
  align-items: center;
  gap: 6px;
  padding-left: 3px;
}

.mark { fill: none; stroke: #d8432c; stroke-width: 4px; }
.brand { color: #d8432c; font-size: 27px; font-style: italic; white-space: nowrap; }
.brand b { font-weight: 800; }
.thin { font-weight: 300; }

.menus { display: flex; gap: 32px; }
.pin { margin: 0 8px 0 auto; }
.pin svg { fill: #8a8a8a; }

.quick {
  flex: 1;
  display: flex;
  align-items: center;
  gap: 12px;
  padding: 0 12px 0 44px;
  background: #e6e6e5;
}

.home { margin-right: 12px; }
.split { display: flex; gap: 12px; }
.drop { width: 28px; color: #333; }
.drop svg, .more svg, .thin-drop svg, .caret { width: 10px; height: 7px; }
.off { margin-right: -12px; }
.off .drop { color: #8c8c8c; }
.spaced { margin-left: 12px; }

.select { display: flex; height: 60px; border: 2px solid #8a8a8a; }
.select .on { width: 60px; background: #b2b2b2; border-right: 2px solid #8a8a8a; }
.select .more { width: 24px; color: #333; }
.doc-name { margin-left: 4px; }

.window-buttons { display: flex; gap: 36px; margin-left: auto; }

/* Ribbon */
.ribbon {
  height: 162px;
  display: flex;
  font-size: 22px;
  border-right: 2px solid #8a8a8a;
}

.group {
  display: flex;
  margin: 2px 0 4px;
  border-right: 2px solid #cfcfcf;
}

.group .big {
  flex-direction: column;
  justify-content: flex-start;
  padding-top: 11px;
  text-align: center;
  position: relative;
}

.big .ic { margin-bottom: 4px; }
.caret { position: absolute; left: 50%; bottom: 20px; margin-left: -5px; color: #333; }

.stack { display: flex; flex-direction: column; }
.stack button { height: 52px; gap: 14px; justify-content: flex-start; white-space: nowrap; }

.boss { width: 550px; padding-left: 11px; }
.boss .big { width: 124px; }
.boss .stack { margin-left: 7px; }
.cut { width: 540px; padding-left: 7px; }
.cut .big { width: 102px; }
.cut .stack { margin-left: 11px; }
.edit { width: 462px; }
.edit .big { width: 74px; }
.edit .wide { width: 90px; }
.edit .stack { width: 128px; margin-left: 8px; }
.edit .second { margin-left: 0; }
.ref { width: 216px; }
.ref .big { width: 84px; }
.ref .wide { width: 126px; }
.last { border: 0; }
.last .big { width: 124px; }
.collapse { align-self: flex-end; margin: 0 15px 19px auto; }
.collapse svg { fill: none; stroke: #444; stroke-width: 4px; }

/* Work area */
.work {
  flex: 1;
  display: flex;
  flex-direction: column;
  border-right: 2px solid #111;
  background: radial-gradient(ellipse 52% 72% at 47% 51%, #f8f8f8, #f3f3f3 30%, #e6e6e6 65%, #d6d6d6);
}

.strip {
  height: 46px;
  display: grid;
  grid-template-columns: 1204px 1fr auto;
  grid-template-rows: 46px;
  box-shadow: inset 0 2px #8f8f8f;
}

.tabs { display: flex; font-size: 23px; color: #3a3a40; }

.tabs button {
  min-width: 112px;
  padding: 0 15px;
  background: #d2d2d2;
  border: 2px solid #929292;
  border-left: 0;
  white-space: nowrap;
}

.tabs .current { background: #f7f7f7; border-color: #f7f7f7 #929292 #929292; font-weight: 600; }

.hud { display: flex; height: 50px; margin-top: 7px; color: #8f8f8f; }
.hud button { width: 52px; }
.hud .ic { opacity: .8; }
.hud .on { background: #999; border: 2px solid #555; }
.hud .on .ic { opacity: 1; }
.hud .thin-drop { width: 28px; }

.doc-buttons { display: flex; height: 50px; margin: 7px 10px 0 0; color: #999; }
.doc-buttons button { width: 52px; }
.doc-buttons .ic { stroke: #999; }

.body { flex: 1; display: flex; }

/* Feature tree */
.panel {
  width: 460px;
  position: relative;
  background: #f8f8f9;
  border-right: 2px solid #929292;
}

.grip {
  height: 32px;
  margin: 4px 4px 8px 0;
  display: flex;
  align-items: center;
  justify-content: center;
  border: solid #cfcfcf;
  border-width: 2px 0;
}

.knob {
  width: 12px;
  height: 12px;
  flex: none;
  border: 2px solid #999;
  border-radius: 50%;
  background: #ddd;
}

.panel-tabs {
  display: flex;
  height: 52px;
  margin-right: 4px;
}

.panel-tabs button {
  width: 80px;
  background: #d4d4d4;
  border: 2px solid #8f8f8f;
  border-left: 0;
}

.panel-tabs .current { background: none; border-bottom-color: transparent; }
.panel-tabs .next { flex: 1; background: none; border-color: transparent transparent #c4c4c4; padding-left: 22px; }
.panel-tabs .next svg { fill: none; stroke: #666; stroke-width: 4px; }

.filter {
  height: 51px;
  margin: 0 6px;
  padding-left: 4px;
  display: flex;
  align-items: center;
  gap: 10px;
  border: 2px solid #c4c4c4;
}

.filter input { flex: 1; border: 0; outline: 0; background: none; font: inherit; }

.tree { list-style: none; margin: 0; padding: 1px 0 0; font-size: 23px; }
.tree li { height: 44px; display: flex; align-items: center; gap: 10px; padding-left: 50px; position: relative; white-space: nowrap; }
.tree .root { padding-left: 5px; gap: 7px; }
.cap { width: 42px; }
.parent::before {
  content: "";
  position: absolute;
  left: 16px;
  border: solid transparent;
  border-width: 7px 0 7px 9px;
  border-left-color: #555;
}

.rollback { height: 6px; margin-right: 4px; background: #4a86bd; }

.splitter {
  position: absolute;
  left: 456px;
  top: 498px;
  width: 20px;
  height: 78px;
  background: #f8f8f9;
  border: 2px solid #929292;
  border-left: 0;
}

/* Model view */
.viewport { flex: 1; position: relative; }
.puck { position: absolute; left: 550px; top: 290px; }
.triad { position: absolute; left: 30px; bottom: 69px; fill: none; }
.axis { font: 16px/16px "Liberation Sans", sans-serif; }
.view-name {
  position: absolute;
  left: 24px;
  bottom: 0;
  color: #1c1c1c;
  font: bold 24px/18px "DejaVu Sans Condensed", "DejaVu Sans", sans-serif;
}

.task-pane {
  position: absolute;
  right: 0;
  top: 57px;
  width: 50px;
  border: solid #929292;
  border-width: 2px 0 0 2px;
}

.task-pane button { width: 48px; height: 48px; background: #d8d8d8; border-bottom: 2px solid #929292; }
.task-pane .current { background: #f7f7f7; }

/* Status bar */
.status {
  height: 45px;
  display: flex;
  align-items: center;
  background: #e7e7e7;
  border-top: 2px solid #9a9a9a;
  border-bottom: 1px solid #777;
  font-size: 23px;
}

.edition { width: 1462px; padding-left: 2px; }
.mode { width: 323px; }
.interface { width: 514px; }
.units { gap: 38px; margin-right: auto; }
.units svg { fill: #444; }
.status button + button { margin-right: 12px; }
.status button:last-child { margin-right: 5px; }
```
